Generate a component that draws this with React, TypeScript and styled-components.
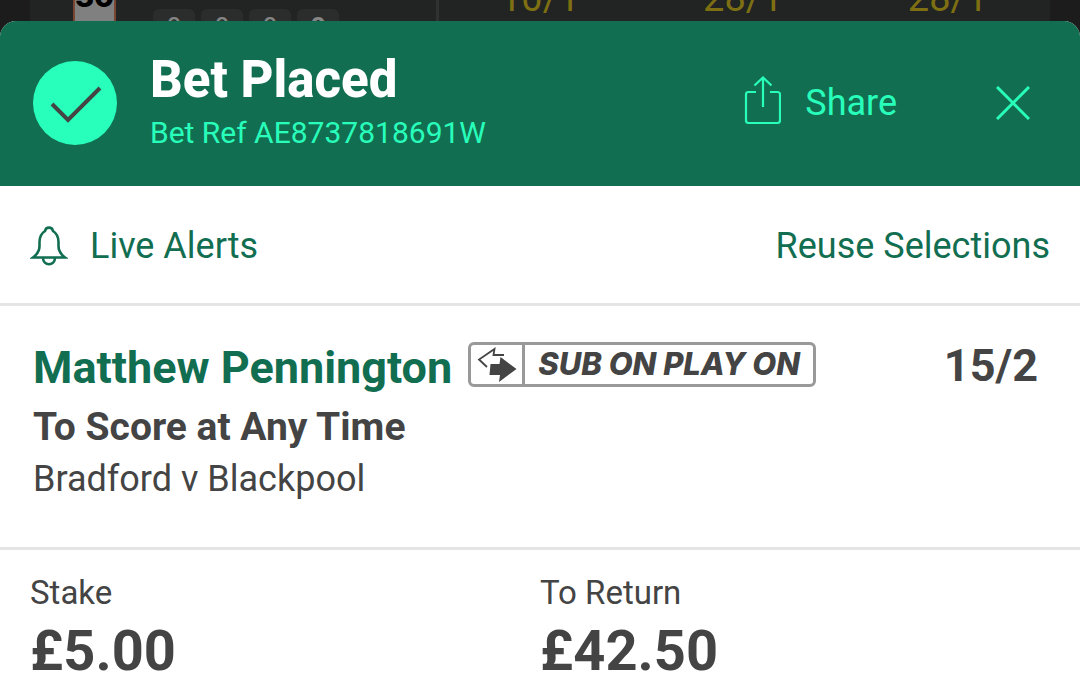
import React from "react";
import styled, { createGlobalStyle } from "styled-components";

const green = "#126e51";
const mint = "#28ffbb";
const ink = "#444444";

const GlobalStyle = createGlobalStyle`
  *, *::before, *::after { box-sizing: border-box; }
  body {
    margin: 0;
    background: #1c1c1c;
    color: ${ink};
    font-family: Roboto, "Liberation Sans", sans-serif;
  }
  h1, h2, p, dl, dt, dd { margin: 0; }
`;

const Page = styled.div`
  display: flex;
  flex-direction: column;
  min-height: 100vh;
`;

const Backdrop = styled.div`
  height: 21px;
  padding: 0 30px;
  overflow: hidden;
`;

const RaceRow = styled.div`
  display: grid;
  grid-template-columns: 406px repeat(3, 1fr);
  height: 21px;
  background: #222423;
`;

const Runner = styled.div`
  display: flex;
  align-items: flex-start;
  padding-left: 43px;
`;

const Silk = styled.div`
  display: flex;
  justify-content: center;
  align-items: flex-end;
  width: 43px;
  height: 21px;
  padding-bottom: 12px;
  border: solid #7a4632;
  border-width: 0 2px;
  background: #808080;
  color: #000;
  font-family: Inter, sans-serif;
  font-size: 29px;
  font-weight: 800;
  line-height: 24px;
`;

const FormList = styled.div`
  display: flex;
  gap: 6px;
  padding: 9px 0 0 37px;
`;

const FormPill = styled.span<{ $strong?: boolean }>`
  width: 42px;
  height: 40px;
  border-radius: 6px;
  background: #2b2d2c;
  color: #858585;
  font-family: Inter, sans-serif;
  font-size: 24px;
  font-weight: ${(p) => (p.$strong ? 700 : 500)};
  line-height: 36px;
  text-align: center;
`;

const Odds = styled.div<{ $divided?: boolean }>`
  display: flex;
  justify-content: center;
  align-items: flex-end;
  height: 21px;
  padding-bottom: 2px;
  border-left: ${(p) => (p.$divided ? "3px solid #303231" : "0")};
  color: #7e7012;
  font-size: 38px;
  line-height: 42px;
`;

const Sheet = styled.main`
  flex: 1;
  border-radius: 16px 16px 0 0;
  background: #fff;
  overflow: hidden;
`;

const Header = styled.header`
  display: flex;
  align-items: center;
  height: 165px;
  padding: 0 50px 2px 33px;
  background: ${green};
  color: ${mint};
`;

const HeaderText = styled.div`
  flex: 1;
  padding-left: 33px;
`;

const Title = styled.h1`
  color: #fff;
  font-size: 51px;
  font-weight: 800;
  line-height: 62px;
`;

const Reference = styled.p`
  padding-bottom: 2px;
  font-size: 30px;
  line-height: 44px;
`;

const PlainButton = styled.button`
  display: flex;
  align-items: center;
  padding: 0;
  border: 0;
  background: none;
  color: inherit;
  font: inherit;
  font-size: 36px;
  line-height: 44px;
  cursor: pointer;
`;

const ShareButton = styled(PlainButton)`
  gap: 24px;
  margin-right: 99px;
`;

const Actions = styled.div`
  display: flex;
  justify-content: space-between;
  align-items: center;
  height: 120px;
  padding: 2px 30px 0;
  border-bottom: 3px solid #e4e4e4;
  color: ${green};
`;

const AlertsButton = styled(PlainButton)`
  gap: 22px;
`;

const Selection = styled.section`
  height: 244px;
  padding: 32px 42px 0 33px;
  border-bottom: 3px solid #e4e4e4;
`;

const SelectionTop = styled.div`
  display: flex;
  align-items: flex-start;
`;

const Player = styled.h2`
  color: ${green};
  font-size: 45px;
  font-weight: 700;
  line-height: 60px;
`;

const Badge = styled.div`
  display: flex;
  height: 45px;
  margin: 4px auto 0 16px;
  border: 3px solid #999;
  border-radius: 6px;
`;

const BadgeIcon = styled.span`
  display: flex;
  align-items: center;
  justify-content: center;
  width: 54px;
  border-right: 3px solid #999;
`;

const BadgeLabel = styled.span`
  padding: 0 13px;
  font-family: Inter, sans-serif;
  font-size: 31px;
  font-style: italic;
  font-weight: 800;
  line-height: 38px;
`;

const Price = styled.span`
  font-size: 45px;
  font-weight: 700;
  line-height: 56px;
`;

const Market = styled.p`
  font-size: 39px;
  font-weight: 700;
  line-height: 58px;
`;

const Fixture = styled.p`
  font-size: 36px;
  line-height: 46px;
`;

const Totals = styled.dl`
  display: grid;
  grid-template-columns: 1fr 1fr;
  padding: 20px 30px 0;
`;

const TotalLabel = styled.dt`
  font-size: 33px;
  line-height: 46px;
`;

const TotalValue = styled.dd`
  font-size: 56px;
  font-weight: 700;
  line-height: 70px;
`;

const CheckIcon = () => (
  <svg width="84" height="84" viewBox="0 0 84 84" aria-hidden="true">
    <circle cx="42" cy="42" r="42" fill={mint} />
    <path d="M19 43L35 59L67 27" fill="none" stroke={ink} strokeWidth="4" />
  </svg>
);

const ShareIcon = () => (
  <svg width="37" height="54" viewBox="0 0 37 54" fill="none" stroke="currentColor" strokeWidth="2.2" aria-hidden="true">
    <path d="M12 16H4.500Q2 16 2 18.500V44.500Q2 47 4.500 47H33.500Q36 47 36 44.500V18.500Q36 16 33.500 16H26M19 31V1.500M10.500 9.500L19 1.500L27.500 9.500" />
  </svg>
);

const CloseIcon = () => (
  <svg width="34" height="34" viewBox="0 0 34 34" fill="none" stroke="currentColor" strokeWidth="3" aria-hidden="true">
    <path d="M1 1L33 33M33 1L1 33" />
  </svg>
);

const BellIcon = () => (
  <svg width="38" height="40" viewBox="0 0 38 40" fill="none" stroke="currentColor" strokeWidth="2.600" aria-hidden="true">
    <path d="M3 31.500C7 28.500 9.500 25 9.500 20V16C9.500 10 12 7 15 5C16 .5 22 .5 23 5C26 7 28.500 10 28.500 16V20C28.500 25 31 28.500 35 31.500ZM13 31.500C13 40.500 25 40.500 25 31.500" />
  </svg>
);

const SwapIcon = () => (
  <svg width="40" height="36" viewBox="0 0 40 36" aria-hidden="true">
    <path d="M10 20L2 12.500L17.500 2L16.500 8H27" fill="none" stroke={ink} strokeWidth="1.800" />
    <path d="M13.500 17H22.500L23.500 10L39.500 22L22 35L23 28H12.500Z" fill={ink} />
  </svg>
);

export default function App() {
  return (
    <Page>
      <GlobalStyle />
      <Backdrop>
        <RaceRow>
          <Runner>
            <Silk>30</Silk>
            <FormList>
              <FormPill>0</FormPill>
              <FormPill>0</FormPill>
              <FormPill>0</FormPill>
              <FormPill $strong>0</FormPill>
            </FormList>
          </Runner>
          <Odds $divided>10/1</Odds>
          <Odds>28/1</Odds>
          <Odds>28/1</Odds>
        </RaceRow>
      </Backdrop>
      <Sheet>
        <Header>
          <CheckIcon />
          <HeaderText>
            <Title>Bet Placed</Title>
            <Reference>Bet Ref AE8737818691W</Reference>
          </HeaderText>
          <ShareButton type="button">
            <ShareIcon />
            Share
          </ShareButton>
          <PlainButton type="button" aria-label="Close">
            <CloseIcon />
          </PlainButton>
        </Header>
        <Actions>
          <AlertsButton type="button">
            <BellIcon />
            Live Alerts
          </AlertsButton>
          <PlainButton type="button">Reuse Selections</PlainButton>
        </Actions>
        <Selection>
          <SelectionTop>
            <Player>Matthew Pennington</Player>
            <Badge>
              <BadgeIcon>
                <SwapIcon />
              </BadgeIcon>
              <BadgeLabel>SUB ON PLAY ON</BadgeLabel>
            </Badge>
            <Price>15/2</Price>
          </SelectionTop>
          <Market>To Score at Any Time</Market>
          <Fixture>Bradford v Blackpool</Fixture>
        </Selection>
        <Totals>
          <div>
            <TotalLabel>Stake</TotalLabel>
            <TotalValue>£5.00</TotalValue>
          </div>
          <div>
            <TotalLabel>To Return</TotalLabel>
            <TotalValue>£42.50</TotalValue>
          </div>
        </Totals>
      </Sheet>
    </Page>
  );
}
